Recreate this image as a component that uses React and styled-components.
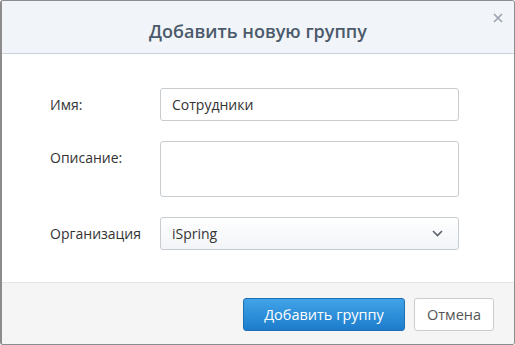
import React from 'react';
import styled, { createGlobalStyle } from 'styled-components';

const GlobalStyle = createGlobalStyle`
  html, body {
    margin: 0;
    padding: 0;
    background: #ffffff;
  }
  body {
    font-family: "Open Sans", "Liberation Sans", sans-serif;
  }
`;

export default function App() {
  return (
    <>
      <GlobalStyle />
      <Dialog>
        <Header>
          <Title>Добавить новую группу</Title>
          <CloseButton aria-label="Закрыть">
            <svg width="10" height="10" viewBox="0 0 10 10">
              <path d="M1 1L9 9M9 1L1 9" stroke="#9aa3ad" strokeWidth="1.6" />
            </svg>
          </CloseButton>
        </Header>
        <Body>
          <Label>Имя:</Label>
          <TextInput defaultValue="Сотрудники" />
          <Label>Описание:</Label>
          <TextArea />
          <Label>Организация</Label>
          <Select>
            <span>iSpring</span>
            <svg width="11" height="7" viewBox="0 0 11 7">
              <path d="M1 1L5.5 5.5L10 1" fill="none" stroke="#5a6068" strokeWidth="1.6" />
            </svg>
          </Select>
        </Body>
        <Footer>
          <Button primary>Добавить группу</Button>
          <Button>Отмена</Button>
        </Footer>
      </Dialog>
    </>
  );
}

const Dialog = styled.div`
  width: 515px;
  height: 345px;
  box-sizing: border-box;
  border: 1px solid #8c8c8c;
  border-left-width: 2px;
  border-radius: 3px;
  display: flex;
  flex-direction: column;
  overflow: hidden;
  background: #ffffff;
`;

const Header = styled.div`
  position: relative;
  height: 53px;
  flex-shrink: 0;
  box-sizing: border-box;
  background: #f1f4f9;
  border-bottom: 1px solid #c9d1d9;
  display: flex;
  align-items: center;
  justify-content: center;
  padding-top: 8px;
`;

const Title = styled.h1`
  margin: 0;
  font-size: 18px;
  font-weight: 600;
  color: #4b5a6a;
  line-height: 24px;
`;

const CloseButton = styled.button`
  position: absolute;
  top: 11px;
  right: 10px;
  width: 12px;
  height: 12px;
  padding: 0;
  border: none;
  background: none;
  display: flex;
  align-items: center;
  justify-content: center;
`;

const Body = styled.div`
  flex: 1;
  display: grid;
  grid-template-columns: 110px 299px;
  row-gap: 20px;
  align-content: start;
  padding: 34px 0 0 48px;
`;

const Label = styled.div`
  font-size: 14px;
  line-height: 33px;
  color: #333333;
`;

const fieldBase = `
  box-sizing: border-box;
  width: 299px;
  border: 1px solid #c7ccd1;
  border-radius: 3px;
  font-family: "Open Sans", "Liberation Sans", sans-serif;
  font-size: 14px;
  color: #333333;
  outline: none;
`;

const TextInput = styled.input`
  ${fieldBase}
  height: 33px;
  padding: 0 11px;
`;

const TextArea = styled.textarea`
  ${fieldBase}
  height: 56px;
  resize: none;
  padding: 6px 11px;
`;

const Select = styled.div`
  ${fieldBase}
  height: 33px;
  padding: 0 15px 0 11px;
  display: flex;
  align-items: center;
  justify-content: space-between;
  background: linear-gradient(#ffffff, #f2f4f7);
`;

const Footer = styled.div`
  height: 62px;
  flex-shrink: 0;
  box-sizing: border-box;
  background: #f5f5f5;
  border-top: 1px solid #e4e4e4;
  display: flex;
  justify-content: flex-end;
  align-items: flex-start;
  gap: 9px;
  padding: 15px 20px 0 0;
`;

const Button = styled.button`
  height: 33px;
  box-sizing: border-box;
  border-radius: 3px;
  font-family: "Open Sans", "Liberation Sans", sans-serif;
  font-size: 14.5px;
  padding: 0;
  width: ${p => (p.primary ? '162px' : '80px')};
  color: ${p => (p.primary ? '#ffffff' : '#555555')};
  border: 1px solid ${p => (p.primary ? '#1f70b3' : '#cccccc')};
  background: ${p =>
    p.primary ? 'linear-gradient(#41a3e8, #1c7ccb)' : '#ffffff'};
`;
